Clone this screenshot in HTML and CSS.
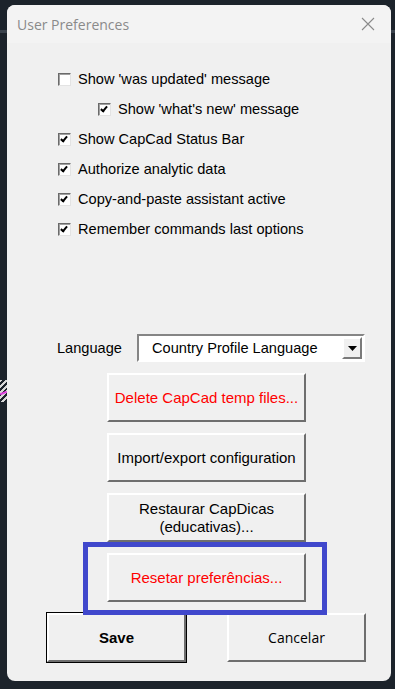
FILE: index.html
```html
<!doctype html>
<html lang="en">
<head>
<meta charset="utf-8">
<title>User Preferences</title>
<meta name="viewport" content="width=device-width,initial-scale=1">
<link rel="stylesheet" href="styles.css">
</head>
<body>
<div class="desk-line"></div>
<div class="desk-stripes"></div>

<div class="dialog">
  <div class="titlebar">
    <span class="title">User Preferences</span>
    <svg class="close" width="14" height="14" viewBox="0 0 14 14"><path d="M1 1L13 13M13 1L1 13" stroke="#8a8a8a" stroke-width="1.1" fill="none"/></svg>
  </div>

  <div class="content">
    <ul class="options">
      <li><span class="box"></span>Show 'was updated' message</li>
      <li class="sub"><span class="box on"></span>Show 'what's new' message</li>
      <li><span class="box on"></span>Show CapCad Status Bar</li>
      <li><span class="box on"></span>Authorize analytic data</li>
      <li><span class="box on"></span>Copy-and-paste assistant active</li>
      <li><span class="box on"></span>Remember commands last options</li>
    </ul>

    <div class="lang-row">
      <span class="lang-label">Language</span>
      <div class="combo">
        <span class="combo-text">Country Profile Language</span>
        <span class="combo-btn"><svg width="9" height="5" viewBox="0 0 9 5"><path d="M0 0H9L4.5 5Z" fill="#000"/></svg></span>
      </div>
    </div>

    <div class="actions">
      <button class="btn red">Delete CapCad temp files...</button>
      <button class="btn">Import/export configuration</button>
      <button class="btn">Restaurar CapDicas<br>(educativas)...</button>
      <button class="btn red">Resetar preferências...</button>
    </div>

    <div class="footer">
      <button class="btn small default">Save</button>
      <button class="btn small cancel">Cancelar</button>
    </div>

    <div class="highlight"></div>
  </div>
</div>
</body>
</html>
```

FILE: styles.css
```css
html,body{margin:0;padding:0;}
body{background:#1c232b;width:395px;height:689px;overflow:hidden;position:relative;font-family:"Liberation Sans",Arial,sans-serif;}

.desk-line{position:absolute;left:0;right:0;top:30px;height:3px;background:#3a424c;}
.desk-stripes{position:absolute;left:0;top:380px;width:7px;height:22px;
  background:repeating-linear-gradient(135deg,#d8d8d8 0 2px,#1c232b 2px 4px);}
.desk-stripes::after{content:"";position:absolute;left:0;top:12px;width:7px;height:2px;background:#e040e0;transform:rotate(-20deg);}

.dialog{position:relative;margin:5px 0 0 7px;width:384px;height:676px;border-radius:8px;overflow:hidden;background:#f0f0f0;}

.titlebar{height:38px;background:#f3f3f3;display:flex;align-items:center;justify-content:space-between;padding:0 16px 0 10px;}
.title{font-family:"Open Sans","Noto Sans",sans-serif;font-size:14px;color:#8a8a8a;}
.close{margin-top:-1px;}

.content{position:relative;height:638px;}

.options{list-style:none;margin:0;padding:21px 0 0 51px;}
.options li{height:30px;display:flex;align-items:center;gap:7px;font-size:14.6px;color:#000;}
.options li.sub{padding-left:40px;}

.box{width:13px;height:13px;box-sizing:border-box;background:#fff;border:1px solid;border-color:#6a6a6a #e3e3e3 #e3e3e3 #6a6a6a;box-shadow:inset 1px 1px 0 #a0a0a0;position:relative;flex:none;}
.box.on::after{content:"";position:absolute;left:3px;top:1px;width:2px;height:5px;border:solid #000;border-width:0 2px 2px 0;transform:rotate(40deg);}

.lang-row{display:flex;align-items:center;margin:90px 0 0 50px;height:28px;}
.lang-label{font-size:14.6px;width:80px;}
.combo{width:228px;height:28px;box-sizing:border-box;background:#fff;border:2px solid;border-color:#858585 #fff #fff #858585;display:flex;align-items:center;justify-content:space-between;}
.combo-text{font-size:14.6px;padding-left:13px;}
.combo-btn{width:20px;height:22px;box-sizing:border-box;background:#f0f0f0;border:2px solid;border-color:#fff #7a7a7a #7a7a7a #fff;display:flex;align-items:center;justify-content:center;margin-right:1px;}

.actions{display:flex;flex-direction:column;gap:11px;margin:11px 0 0 100px;width:199px;}

.btn{font-family:"Liberation Sans",Arial,sans-serif;font-size:15px;color:#000;background:#f0f0f0;height:49px;box-sizing:border-box;border:2px solid;border-color:#fff #6e6e6e #6e6e6e #fff;padding:1px 0 0;line-height:18px;}
.btn.red{color:#f00;}

.footer{display:flex;gap:41px;margin:11px 0 0 40px;}
.btn.small{width:139px;}
.btn.default{font-weight:bold;font-size:15px;outline:1px solid #000;outline-offset:0;}
.btn.cancel{font-family:"Open Sans","Noto Sans",sans-serif;font-size:14px;}

.highlight{position:absolute;left:76px;top:499px;width:244px;height:73px;box-sizing:border-box;border:5px solid #4048cc;}
```
